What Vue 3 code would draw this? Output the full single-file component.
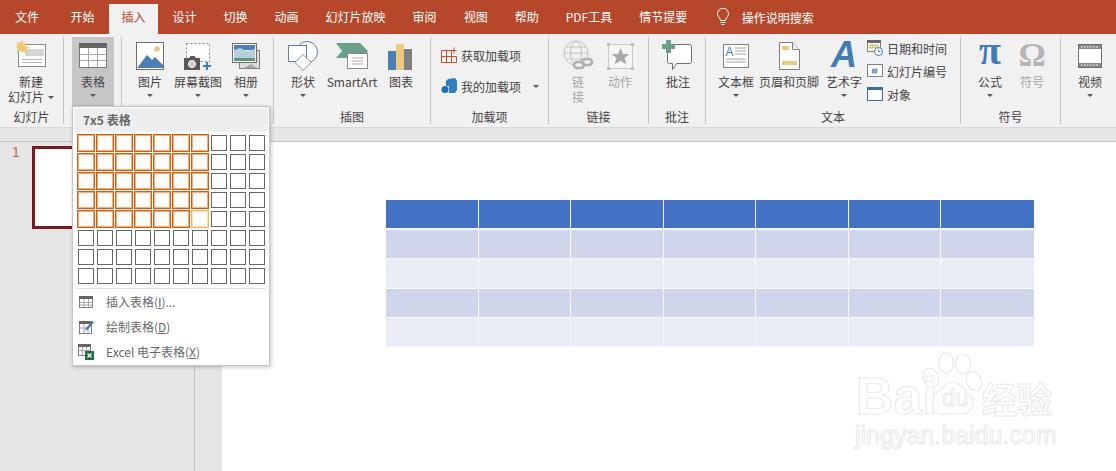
<template>
  <div class="app">
    <div class="tabs">
      <div v-for="t in tabs" :key="t" class="tab" :class="{ active: t === '插入', file: t === '文件' }">{{ t }}</div>
      <div class="search">
        <svg width="14" height="18" viewBox="0 0 14 18" fill="none" stroke="#fff" stroke-width="1">
          <path d="M4.5 12.5C4.5 10 1.5 9 1.5 5.8a5.5 5.5 0 0 1 11 0C12.500 9 9.500 10 9.500 12.500z" />
          <path d="M4.500 14.500h5M5.500 16.500h3" />
        </svg>
        <span>操作说明搜索</span>
      </div>
    </div>

    <div class="ribbon">
      <div class="group g-slide">
        <div class="body">
          <div class="btn w-62">
            <svg class="ico" viewBox="0 0 32 32">
              <rect x="3.500" y="4.500" width="27" height="22" fill="#fff" stroke="#8a8a8a" />
              <rect x="10" y="9" width="19" height="7" fill="#d4d4d4" />
              <path d="M7 19.500h20M7 22.500h20" stroke="#b5b5b5" />
              <path d="M7 0l1.500 4 4-1.500L11 6.500l4 1-4 1.500 1.500 4-4-1.500L7 13l-1.500-2.500-4 1.500L3 8 0 6.500l3-1L1.500 2l4 1z" fill="#f0c870" />
            </svg>
            <span class="lab">新建</span>
            <span class="lab">幻灯片<i class="caret inline"></i></span>
          </div>
        </div>
        <div class="glabel">幻灯片</div>
      </div>

      <div class="group g-table">
        <div class="body">
          <div class="btn w-42 pressed">
            <svg class="ico" viewBox="0 0 32 32">
              <rect x="2.500" y="3.500" width="27" height="24" fill="#fff" stroke="#7a7a7a" />
              <rect x="2" y="3" width="28" height="5" fill="#666" />
              <path d="M11.500 8v19M20.500 8v19M3 14.500h26M3 20.500h26" stroke="#a8a8a8" />
            </svg>
            <span class="lab">表格</span>
            <i class="caret"></i>
          </div>
        </div>
      </div>

      <div class="group g-image">
        <div class="body">
          <div class="btn w-40">
            <svg class="ico" viewBox="0 0 32 32">
              <rect x="2.500" y="2.500" width="27" height="27" fill="#fff" stroke="#6f6f6f" />
              <circle cx="23" cy="9" r="2.800" fill="#edc87e" />
              <path d="M3 28L13 15l5 5 3-3 8 8v3z" fill="#4a7eb5" />
            </svg>
            <span class="lab">图片</span>
            <i class="caret"></i>
          </div>
          <div class="btn w-56">
            <svg class="ico" viewBox="0 0 32 32">
              <rect x="4.500" y="3.500" width="23" height="18" fill="#fff" stroke="#8a8a8a" stroke-dasharray="2 2" />
              <path d="M2 18h5l1.500-2h4l1.500 2h4v12H2z" fill="#595959" />
              <circle cx="10" cy="24" r="3.500" fill="#ccc" stroke="#fff" />
              <path d="M25 22v8M21 26h8" stroke="#3f7bb5" stroke-width="2" />
            </svg>
            <span class="lab">屏幕截图</span>
            <i class="caret"></i>
          </div>
          <div class="btn w-40">
            <svg class="ico" viewBox="0 0 32 32">
              <rect x="9.500" y="10.500" width="20" height="18" fill="#dcdcdc" stroke="#808080" />
              <rect x="2.500" y="3.500" width="24" height="19" fill="#fff" stroke="#6f6f6f" />
              <rect x="4" y="5" width="21" height="5" fill="#4a7eb5" />
              <path d="M4 10l6-2 7 3 8-2v9H4z" fill="#b8d0dd" />
              <path d="M4 18h21v3H4z" fill="#62967f" />
              <path d="M14 28l7-4 6 4z" fill="#a8a8a8" />
            </svg>
            <span class="lab">相册</span>
            <i class="caret"></i>
          </div>
        </div>
      </div>

      <div class="group g-illus">
        <div class="body">
          <div class="btn w-40">
            <svg class="ico" viewBox="0 0 32 32" fill="#fff" stroke="#5b83a8">
              <circle cx="20" cy="12" r="10.500" />
              <rect x="1.500" y="5.500" width="18" height="16" />
              <path d="M16 14.500l8 8-8 8-8-8z" stroke="#7d8c99" />
            </svg>
            <span class="lab">形状</span>
            <i class="caret"></i>
          </div>
          <div class="btn w-58">
            <svg class="ico" viewBox="0 0 32 32">
              <path d="M0 3h24l8 8-5 7H0l6-7z" fill="#6a9f8c" />
              <rect x="11.500" y="13.500" width="20" height="15" fill="#fff" stroke="#8a8a8a" />
              <path d="M16 18h11M16 21h11M16 24h11" stroke="#a8a8a8" />
            </svg>
            <span class="lab">SmartArt</span>
          </div>
          <div class="btn w-40">
            <svg class="ico" viewBox="0 0 32 32">
              <rect x="3" y="11" width="8" height="19" fill="#4a7eb5" />
              <rect x="11" y="4" width="8" height="26" fill="#edc87e" />
              <rect x="19" y="9" width="8" height="21" fill="#808080" />
            </svg>
            <span class="lab">图表</span>
          </div>
        </div>
        <div class="glabel">插图</div>
      </div>

      <div class="group g-addin">
        <div class="body addin-col">
          <div class="small">
            <svg class="sico" viewBox="0 0 16 16" fill="none" stroke="#c5512a">
              <path d="M.5 3.500h10v12H.5zM.5 9.500h15v6h-5M5.500 3.500v12" />
              <path d="M13 .500v6M10.500 3.500h5" />
            </svg>
            <span>获取加载项</span>
          </div>
          <div class="small">
            <svg class="sico" viewBox="0 0 16 16">
              <path d="M7 1l7-1 2 3v9l-2 3H8V8H5V3z" fill="#2f7fc4" />
              <circle cx="4" cy="11.500" r="3.500" fill="#1f6fb8" />
            </svg>
            <span>我的加载项</span>
            <i class="caret addin-caret"></i>
          </div>
        </div>
        <div class="glabel">加载项</div>
      </div>

      <div class="group g-link">
        <div class="body">
          <div class="btn w-42 off">
            <svg class="ico" viewBox="0 0 32 32" fill="none" stroke="#c4c4c4">
              <circle cx="14" cy="13" r="12" />
              <ellipse cx="14" cy="13" rx="5.500" ry="12" />
              <path d="M2 13h24M4 7h20M4 19h20" />
              <rect x="12" y="22" width="10" height="6" rx="3" stroke="#b0b0b0" stroke-width="2.500" fill="#f1f1f1" />
              <rect x="20" y="19" width="10" height="6" rx="3" stroke="#b0b0b0" stroke-width="2.500" />
            </svg>
            <span class="lab">链</span>
            <span class="lab">接</span>
          </div>
          <div class="btn w-42 off">
            <svg class="ico" viewBox="0 0 32 32">
              <rect x="4.500" y="4.500" width="24" height="24" fill="#f5f5f5" stroke="#c8c8c8" />
              <path d="M16.500 8l2.500 6h6.500l-5 4 2 6.500-6-3.800-6 3.800 2-6.500-5-4H14z" fill="#a8a8a8" />
              <path d="M3 3h3v3H3zM27 3h3v3h-3zM3 27h3v3H3zM27 27h3v3h-3z" fill="#bcbcbc" />
            </svg>
            <span class="lab">动作</span>
          </div>
        </div>
        <div class="glabel">链接</div>
      </div>

      <div class="group g-comment">
        <div class="body">
          <div class="btn w-40">
            <svg class="ico" viewBox="0 0 32 32">
              <path d="M5.500 6.500a2 2 0 0 1 2-2h20a2 2 0 0 1 2 2v15a2 2 0 0 1-2 2h-13l-4 6v-6h-3a2 2 0 0 1-2-2z" fill="#fff" stroke="#6f6f6f" />
              <path d="M4 0h5v4h4v5H9v4H4V9H0V4h4z" fill="#6a9f8c" />
            </svg>
            <span class="lab">批注</span>
          </div>
        </div>
        <div class="glabel">批注</div>
      </div>

      <div class="group g-text">
        <div class="body">
          <div class="btn w-40">
            <svg class="ico" viewBox="0 0 32 32">
              <rect x="3.500" y="4.500" width="25" height="23" fill="#fff" stroke="#808080" />
              <text x="5.500" y="16" class="ico-a">A</text>
              <path d="M15 8h11M15 11h11M15 14h11M6 19h20M6 22h20" stroke="#a0a0a0" />
            </svg>
            <span class="lab">文本框</span>
            <i class="caret"></i>
          </div>
          <div class="btn w-66">
            <svg class="ico" viewBox="0 0 32 32">
              <path d="M6.500 2.500h13l7 7v20h-20z" fill="#fff" stroke="#808080" />
              <path d="M19.500 2.500v7h7" fill="#eee" stroke="#808080" />
              <rect x="9" y="6" width="7" height="4" fill="#edc87e" />
              <rect x="9" y="21" width="15" height="4" fill="#edc87e" />
            </svg>
            <span class="lab">页眉和页脚</span>
          </div>
          <div class="btn w-44">
            <div class="ico art">A</div>
            <span class="lab">艺术字</span>
            <i class="caret"></i>
          </div>
          <div class="text-col">
            <div class="small">
              <svg class="sico" viewBox="0 0 16 16">
                <rect x=".500" y=".500" width="13" height="11" fill="#fff" stroke="#808080" />
                <rect y="0" width="14" height="3" fill="#666" />
                <path d="M3 5h3v3H3zM8 5h3v3H8z" fill="none" stroke="#c89a3e" />
                <circle cx="11.500" cy="11.500" r="4" fill="#fff" stroke="#3f7bb5" />
                <path d="M11.500 9.500v2h2" fill="none" stroke="#3f7bb5" />
              </svg>
              <span>日期和时间</span>
            </div>
            <div class="small">
              <svg class="sico" viewBox="0 0 16 16">
                <rect x=".500" y="1.500" width="15" height="12" fill="#fff" stroke="#808080" />
                <path d="M5 5h6v6H5z" fill="#dce6f0" />
                <path d="M6.500 5.500l-1 5M9.500 5.500l-1 5M5 7h5.500M4.500 9H10" stroke="#4a6f95" stroke-width=".8" />
              </svg>
              <span>幻灯片编号</span>
            </div>
            <div class="small obj">
              <svg class="sico" viewBox="0 0 16 16">
                <rect x=".500" y="1.500" width="15" height="13" fill="#fff" stroke="#3b6ea5" />
                <rect y="1" width="16" height="3" fill="#3b6ea5" />
              </svg>
              <span>对象</span>
            </div>
          </div>
        </div>
        <div class="glabel">文本</div>
      </div>

      <div class="group g-symbol">
        <div class="body">
          <div class="btn w-42">
            <div class="ico sym pi">π</div>
            <span class="lab">公式</span>
            <i class="caret"></i>
          </div>
          <div class="btn w-42 off">
            <div class="ico sym omega">Ω</div>
            <span class="lab">符号</span>
          </div>
        </div>
        <div class="glabel">符号</div>
      </div>

      <div class="group g-media">
        <div class="body">
          <div class="btn w-42">
            <svg class="ico" viewBox="0 0 32 32">
              <rect x="4.500" y="4.500" width="23" height="23" fill="#fff" stroke="#707070" />
              <path d="M5 5h22v4H5zM5 23h22v4H5z" fill="#8a8a8a" />
              <path d="M7 7h18M7 25h18" stroke="#fff" stroke-dasharray="1.500 1.500" />
            </svg>
            <span class="lab">视频</span>
            <i class="caret"></i>
          </div>
        </div>
      </div>
    </div>

    <div class="strip"></div>

    <div class="main">
      <div class="thumbs">
        <span class="num">1</span>
        <div class="thumb"></div>
      </div>
      <div class="scroll"></div>
      <div class="slide">
        <div class="tbl">
          <template v-for="(r, i) in 5" :key="i">
            <div v-for="c in 7" :key="c" class="cell" :class="rowClass(i)"></div>
          </template>
        </div>
      </div>
    </div>

    <div class="popup">
      <div class="pop-head">7x5 表格</div>
      <div class="pop-grid">
        <div v-for="n in 80" :key="n" class="gc" :class="cellClass(n - 1)"></div>
      </div>
      <div class="pop-sep"></div>
      <div class="pop-item">
        <svg class="sico" viewBox="0 0 16 16">
          <rect x="1.500" y="2.500" width="13" height="11" fill="#fff" stroke="#808080" />
          <rect x="1" y="2" width="14" height="3" fill="#666" />
          <path d="M6 5v8M10.500 5v8M2 8.500h12M2 11h12" stroke="#a8a8a8" />
        </svg>
        <span>插入表格(<u>I</u>)...</span>
      </div>
      <div class="pop-item">
        <svg class="sico" viewBox="0 0 16 16">
          <rect x="1.500" y="2.500" width="12" height="12" fill="#fff" stroke="#808080" />
          <rect x="1" y="2" width="13" height="3" fill="#666" />
          <path d="M6 5v9M10 9v5M2 9h8" stroke="#a8a8a8" />
          <path d="M8 9l6-7 2 1.500-6 7-3 1z" fill="#4a7eb5" />
        </svg>
        <span>绘制表格(<u>D</u>)</span>
      </div>
      <div class="pop-item">
        <svg class="sico" viewBox="0 0 16 16">
          <rect x=".500" y=".500" width="12" height="11" fill="#fff" stroke="#808080" />
          <rect width="13" height="3" fill="#666" />
          <path d="M4.500 3v8M8.500 3v8M1 6.500h11" stroke="#a8a8a8" />
          <rect x="7" y="7" width="9" height="9" fill="#1e7145" />
          <path d="M9.500 9.500l4 4M13.500 9.500l-4 4" stroke="#fff" stroke-width="1.200" />
        </svg>
        <span>Excel 电子表格(<u>X</u>)</span>
      </div>
    </div>

    <div class="mark">
      <svg class="paw" width="62" height="66" viewBox="0 0 62 66" fill="#fff" stroke="#e9e9e9" stroke-width="1.200">
        <ellipse cx="24" cy="13" rx="7.500" ry="10" />
        <ellipse cx="41" cy="14" rx="7.500" ry="10" />
        <ellipse cx="9" cy="28" rx="7.500" ry="10" transform="rotate(-20 9 28)" />
        <ellipse cx="52" cy="31" rx="7.500" ry="10" transform="rotate(-20 52 31)" />
        <path d="M31 32c7 0 9 7 15 11 7 5 7 20-6 21-5 .400-12-2-19 0-13 1-15-15-7-21 7-4 9-11 17-11z" />
      </svg>
      <span class="m-bai">Bai</span>
      <span class="m-du">du</span>
      <span class="m-jy">经验</span>
      <span class="m-url">jingyan.baidu.com</span>
    </div>
  </div>
</template>

<script setup>
const tabs = ["文件", "开始", "插入", "设计", "切换", "动画", "幻灯片放映", "审阅", "视图", "帮助", "PDF工具", "情节提要"];

function rowClass(i) {
  if (i === 0) return "head";
  return i % 2 === 1 ? "dark" : "light";
}

// first 7 columns of the first 5 rows are picked, the last one is the hovered cell
function cellClass(n) {
  const col = n % 10;
  const row = Math.floor(n / 10);
  if (col === 6 && row === 4) return "hover";
  return col < 7 && row < 5 ? "on" : "";
}
</script>

<style>
html, body {
  margin: 0;
  background: #fff;
}
</style>

<style scoped>
.app {
  position: relative;
  width: 1116px;
  height: 471px;
  overflow: hidden;
  font-family: "Noto Sans CJK SC", "Liberation Sans", sans-serif;
  font-size: 12px;
  color: #444;
  display: flex;
  flex-direction: column;
}
.tabs {
  height: 34px;
  background: #b7472a;
  display: flex;
  gap: 2px;
  color: #fff;
  flex: none;
}
.tab {
  padding: 0 12.5px;
  line-height: 26px;
  height: 30px;
  margin-top: 4px;
  white-space: nowrap;
}
.tab.file {
  padding: 0 17px 0 15px;
}
.tab.active {
  background: #f1f1f1;
  color: #b7472a;
}
.search {
  display: flex;
  align-items: center;
  gap: 12px;
  margin-left: 14px;
}
.ribbon {
  height: 94px;
  flex: none;
  background: #f1f1f1;
  border-bottom: 1px solid #d9d9d9;
  box-sizing: border-box;
  display: flex;
  padding-top: 3px;
}
.group {
  height: 87px;
  box-sizing: border-box;
  border-right: 1px solid #c6c6c6;
  display: flex;
  flex-direction: column;
  flex: none;
}
.body {
  height: 72px;
  display: flex;
  flex: none;
}
.glabel {
  text-align: center;
  line-height: 15px;
  color: #444;
}
.g-slide { width: 64px; }
.g-table { width: 58px; }
.g-image { width: 152px; }
.g-illus { width: 157px; }
.g-addin { width: 118px; }
.g-link { width: 100px; }
.g-comment { width: 57px; }
.g-text { width: 255px; }
.g-symbol { width: 100px; }
.g-media { width: 55px; border-right: 0; }
.g-table .body, .g-image .body, .g-link .body, .g-symbol .body, .g-media .body { padding-left: 8px; }
.g-illus .body, .g-comment .body { padding-left: 9px; }
.g-text .body { padding-left: 10px; }
.btn {
  display: flex;
  flex-direction: column;
  align-items: center;
  padding-top: 3px;
  box-sizing: border-box;
  height: 70px;
  flex: none;
}
.btn.off, .btn.off .lab {
  color: #a6a6a6;
}
.pressed {
  background: #c6c6c6;
}
.w-40 { width: 40px; }
.w-42 { width: 42px; }
.w-44 { width: 44px; }
.w-56 { width: 56px; }
.w-58 { width: 58px; }
.w-62 { width: 62px; }
.w-66 { width: 66px; }
.ico {
  width: 32px;
  height: 32px;
  margin-bottom: 2px;
  flex: none;
}
.lab {
  line-height: 15px;
  white-space: nowrap;
}
.caret {
  display: block;
  width: 0;
  height: 0;
  margin-top: 5px;
  border: 3px solid transparent;
  border-top-color: #555;
  border-bottom: 0;
}
.caret.inline {
  display: inline-block;
  margin: 0 0 2px 4px;
  vertical-align: middle;
}
.art {
  font: italic bold 36px/30px "Liberation Sans", sans-serif;
  color: #3f7bb5;
  text-align: center;
}
.sym {
  font: bold 40px/22px "Liberation Serif", serif;
  text-align: center;
}
.pi { color: #3f7bb5; }
.omega { color: #b5b5b5; font-size: 34px; line-height: 30px; }
.ico-a {
  font: 12px "Liberation Sans", sans-serif;
  fill: #3f7bb5;
}
.sico {
  width: 16px;
  height: 16px;
  flex: none;
}
.small {
  display: flex;
  align-items: center;
  gap: 4px;
  height: 16px;
  white-space: nowrap;
}
.addin-col {
  flex-direction: column;
  gap: 15px;
  padding: 10px 0 0 10px;
  height: 62px;
}
.addin-caret {
  margin: 0 0 0 8px;
}
.text-col {
  display: flex;
  flex-direction: column;
  gap: 7px;
  padding: 3px 0 0 1px;
}
.strip {
  height: 13px;
  flex: none;
  background: #e6e6e6;
  border-bottom: 1px solid #c6c6c6;
}
.main {
  flex: 1;
  display: flex;
  background: #e6e6e6;
}
.thumbs {
  width: 195px;
  flex: none;
  display: flex;
  align-items: flex-start;
  gap: 12px;
  padding: 2px 0 0 12px;
  box-sizing: border-box;
  border-right: 1px solid #c6c6c6;
}
.num {
  color: #c4664a;
  font-family: "Liberation Sans", sans-serif;
  font-size: 14px;
  line-height: 16px;
}
.thumb {
  width: 148px;
  height: 77px;
  margin-top: 2px;
  background: #fff;
  border: 3px solid #7b1a1a;
}
.scroll {
  width: 27px;
  flex: none;
}
.slide {
  flex: 1;
  background: #fff;
  padding: 58px 0 0 164px;
}
.tbl {
  width: 648px;
  display: grid;
  grid-template-columns: repeat(7, 1fr);
  grid-template-rows: 30px 29px 30px 29px 29px;
}
.cell {
  border-right: 1px solid #f6f7fb;
  border-bottom: 1px solid #f6f7fb;
}
.cell:nth-child(7n) { border-right: 0; }
.head { background: #4472c4; border-bottom-width: 2px; }
.dark { background: #cfd5ea; }
.light { background: #e9ebf5; }
.popup {
  position: absolute;
  left: 72px;
  top: 106px;
  width: 198px;
  height: 260px;
  box-sizing: border-box;
  background: #fff;
  border: 1px solid #c6c6c6;
  box-shadow: 1px 1px 4px rgba(0, 0, 0, 0.25);
  padding: 1px;
  color: #666;
}
.pop-head {
  height: 24px;
  line-height: 23px;
  padding-left: 9px;
  background: #eeeeee;
  font-weight: 700;
  color: #666;
}
.pop-grid {
  display: grid;
  grid-template-columns: repeat(10, 19px);
  grid-auto-rows: 19px;
  padding: 2px 0 0 3px;
}
.gc {
  box-sizing: border-box;
  width: 16px;
  height: 16px;
  margin: 1px;
  border: 1px solid #666;
}
.gc.on, .gc.hover {
  width: 18px;
  height: 18px;
  margin: 0;
  border: 1px solid #cf5a1c;
  box-shadow: inset 0 0 0 1px #f6b06a;
  background: #fffdfb;
}
.gc.hover {
  border-color: #f4b35c;
  box-shadow: inset 0 0 0 1px #fde3b4;
  background: #fffdf8;
}
.pop-sep {
  height: 1px;
  background: #e1e1e1;
  margin: 2px 2px 0;
}
.pop-item {
  height: 25px;
  display: flex;
  align-items: center;
  gap: 12px;
  padding-left: 4px;
}
.mark {
  position: absolute;
  left: 850px;
  top: 350px;
  width: 220px;
  height: 105px;
  color: #fff;
  -webkit-text-stroke: 1px #e9e9e9;
  font-family: "Liberation Sans", sans-serif;
}
.paw {
  position: absolute;
  left: 72px;
  top: 0;
}
.mark span {
  position: absolute;
  white-space: nowrap;
}
.m-bai {
  left: 6px;
  top: 24px;
  font-size: 52px;
  font-weight: 700;
  line-height: 44px;
}
.m-du {
  left: 92px;
  top: 34px;
  font-size: 24px;
  line-height: 28px;
}
.m-jy {
  left: 132px;
  top: 28px;
  font-family: "Noto Sans CJK SC", sans-serif;
  font-size: 35px;
  font-weight: 700;
  line-height: 40px;
}
.m-url {
  left: 5px;
  top: 72px;
  font-size: 25px;
  line-height: 26px;
}
</style>
